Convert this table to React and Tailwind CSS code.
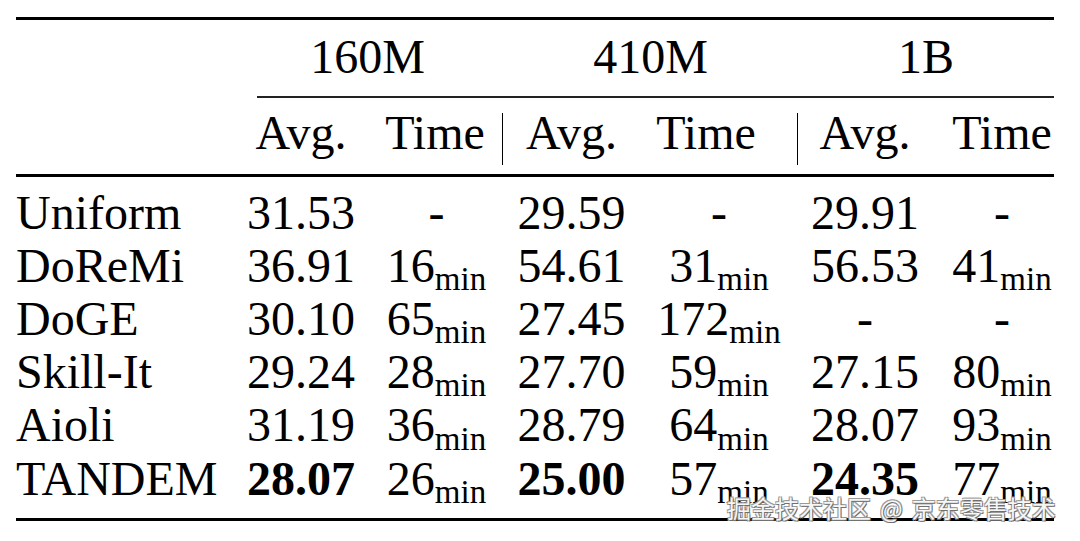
export default function App() {
  const rows = [
    { name: "Uniform", v: [["31.53", false], ["-", null], ["29.59", false], ["-", null], ["29.91", false], ["-", null]] },
    { name: "DoReMi", v: [["36.91", false], ["16", "t"], ["54.61", false], ["31", "t"], ["56.53", false], ["41", "t"]] },
    { name: "DoGE", v: [["30.10", false], ["65", "t"], ["27.45", false], ["172", "t"], ["-", false], ["-", null]] },
    { name: "Skill-It", v: [["29.24", false], ["28", "t"], ["27.70", false], ["59", "t"], ["27.15", false], ["80", "t"]] },
    { name: "Aioli", v: [["31.19", false], ["36", "t"], ["28.79", false], ["64", "t"], ["28.07", false], ["93", "t"]] },
    { name: "TANDEM", v: [["28.07", true], ["26", "t"], ["25.00", true], ["57", "t"], ["24.35", true], ["77", "t"]] },
  ];

  const Cell = ({ val, kind, idx }) => {
    const pad = idx === 5 ? "pl-[18px]" : "";
    if (kind === "t") {
      return (
        <div className={`text-center whitespace-nowrap ${pad}`}>
          {val}
          <sub className="text-[33px]">min</sub>
        </div>
      );
    }
    return (
      <div className={`text-center whitespace-nowrap ${pad} ${kind === true ? "font-bold" : ""}`}>
        {val}
      </div>
    );
  };

  return (
    <div className="relative w-[1080px] h-[541px] overflow-hidden bg-white text-black text-[48px] font-['Liberation_Serif','Times_New_Roman',serif]">
      <div className="ml-[16px] w-[1038px] pt-[17px]">
        <div className="h-[3px] bg-black" />

        <div className="mt-[10px] grid grid-cols-[216px_138px_133px_137px_158px_134px_122px] leading-[53px]">
          <div />
          <div className="col-span-2 text-center">160M</div>
          <div className="col-span-2 text-center">410M</div>
          <div className="col-span-2 text-center">1B</div>
        </div>

        <div className="mt-[13px] ml-[241px] h-[1.5px] bg-[#222]" />

        <div className="mt-[8.5px] grid grid-cols-[216px_138px_133px_137px_158px_134px_122px] leading-[53px]">
          <div />
          <div className="text-center">Avg.</div>
          <div className="mt-[7px] h-[52px] border-r-[1.5px] border-black">
            <div className="-mt-[7px] pr-[2px] text-center">Time</div>
          </div>
          <div className="text-center">Avg.</div>
          <div className="mt-[7px] h-[52px] border-r-[1.5px] border-black">
            <div className="-mt-[7px] pr-[25px] text-center">Time</div>
          </div>
          <div className="text-center">Avg.</div>
          <div className="pl-[18px] text-center">Time</div>
        </div>

        <div className="mt-[9px] h-[2.5px] bg-black" />

        <div className="mt-[9px] flex flex-col">
          {rows.map((r) => (
            <div
              key={r.name}
              className="grid grid-cols-[216px_138px_133px_137px_158px_134px_122px] leading-[53.2px]"
            >
              <div className="whitespace-nowrap">{r.name}</div>
              {r.v.map(([val, kind], i) => (
                <Cell key={i} val={val} kind={kind} idx={i} />
              ))}
            </div>
          ))}
        </div>

        <div className="mt-[13.5px] h-[3px] bg-black" />
      </div>

      <div className="absolute left-[727px] top-[496px] flex items-center whitespace-nowrap text-[24px] leading-none text-[#f6f6f6] font-['Noto_Sans_CJK_SC','Noto_Sans',sans-serif] [text-shadow:1px_1px_0_#6f6f6f,-1px_-1px_0_#999,1px_-1px_0_#999,-1px_1px_0_#999]">
        <span>掘金技术社区</span>
        <span className="mx-[9px]">@</span>
        <span>京东零售技术</span>
      </div>
    </div>
  );
}
